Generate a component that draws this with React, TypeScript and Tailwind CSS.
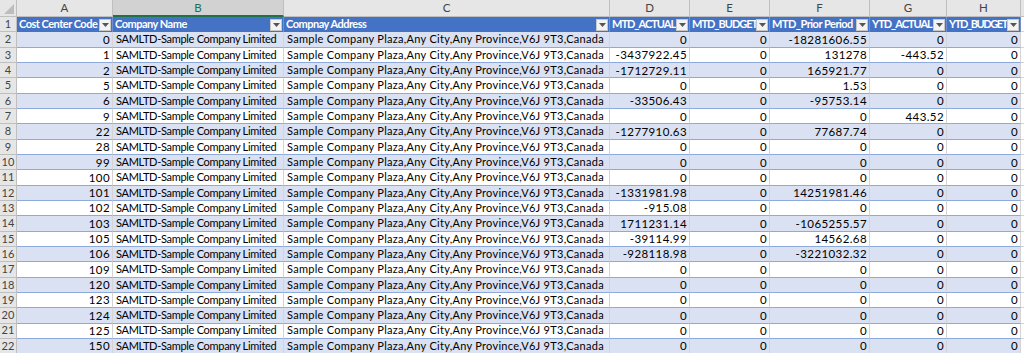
const cols = ["A", "B", "C", "D", "E", "F", "G", "H", ""];

// label + letter spacing so the bold names fit their cells the way Calibri does
const headers: [string, string][] = [
  ["Cost Center Code", "tracking-[-0.5px]"],
  ["Company Name", "tracking-[-0.5px]"],
  ["Compnay Address", "tracking-[-0.5px]"],
  ["MTD_ACTUAL", "tracking-[-1px]"],
  ["MTD_BUDGET", "tracking-[-1px]"],
  ["MTD_Prior Period", "tracking-[-0.5px]"],
  ["YTD_ACTUAL", "tracking-[-1px]"],
  ["YTD_BUDGET", "tracking-[-1.4px]"],
];

const NAME = "SAMLTD-Sample Company Limited";
const ADDR = "Sample Company Plaza,Any City,Any Province,V6J 9T3,Canada";

// code, mtd actual, mtd budget, mtd prior, ytd actual, ytd budget
const rows: [string, string, string, string, string, string][] = [
  ["0", "0", "0", "-18281606.55", "0", "0"],
  ["1", "-3437922.45", "0", "131278", "-443.52", "0"],
  ["2", "-1712729.11", "0", "165921.77", "0", "0"],
  ["5", "0", "0", "1.53", "0", "0"],
  ["6", "-33506.43", "0", "-95753.14", "0", "0"],
  ["9", "0", "0", "0", "443.52", "0"],
  ["22", "-1277910.63", "0", "77687.74", "0", "0"],
  ["28", "0", "0", "0", "0", "0"],
  ["99", "0", "0", "0", "0", "0"],
  ["100", "0", "0", "0", "0", "0"],
  ["101", "-1331981.98", "0", "14251981.46", "0", "0"],
  ["102", "-915.08", "0", "0", "0", "0"],
  ["103", "1711231.14", "0", "-1065255.57", "0", "0"],
  ["105", "-39114.99", "0", "14562.68", "0", "0"],
  ["106", "-928118.98", "0", "-3221032.32", "0", "0"],
  ["109", "0", "0", "0", "0", "0"],
  ["120", "0", "0", "0", "0", "0"],
  ["123", "0", "0", "0", "0", "0"],
  ["124", "0", "0", "0", "0", "0"],
  ["125", "0", "0", "0", "0", "0"],
  ["150", "0", "0", "0", "0", "0"],
];

function FilterButton() {
  return (
    <span className="absolute right-px top-1/2 flex h-[12px] w-[12px] -translate-y-1/2 items-center justify-center border border-[#c8c8c8] bg-[#f3f3f3]">
      <svg width="7" height="4" viewBox="0 0 7 4">
        <path d="M0 0h7L3.5 4z" fill="#555" />
      </svg>
    </span>
  );
}

export default function App() {
  return (
    <div
      className="h-[353px] w-[1024px] overflow-hidden bg-white text-[11px] text-black"
      style={{ fontFamily: "Lato, 'Noto Sans', sans-serif" }}
    >
      <div className="grid grid-cols-[17px_96px_171px_326px_80px_80px_100px_77px_74px_60px] grid-rows-[17px_repeat(22,15.33px)]">
        {/* column letters */}
        <div className="relative border-r border-b border-[#bfbfbf] bg-[#e6e6e6]">
          <svg className="absolute bottom-[2px] right-[2px]" width="10" height="10" viewBox="0 0 10 10">
            <path d="M10 0V10H0z" fill="#bdbdbd" />
          </svg>
        </div>
        {cols.map((c, i) =>
          c === "B" ? (
            <div
              key={i}
              className="flex items-center justify-center border-r border-b-2 border-r-[#bfbfbf] border-b-[#217346] bg-[#d2d2d2] text-[11.5px] text-[#217346]"
            >
              {c}
            </div>
          ) : (
            <div
              key={i}
              className="flex items-center justify-center border-r border-b border-[#bfbfbf] bg-[#e6e6e6] text-[11.5px] text-[#444]"
            >
              {c}
            </div>
          )
        )}

        {/* table header row */}
        <div className="flex items-center justify-center border-r border-b border-[#bfbfbf] bg-[#e6e6e6] text-[#444]">1</div>
        {headers.map(([h, track]) => (
          <div
            key={h}
            className={`relative flex items-center overflow-hidden whitespace-nowrap border-r border-[#6f8fd0] bg-[#4472c4] pl-[2px] font-bold text-white ${track}`}
          >
            {h}
            <FilterButton />
          </div>
        ))}
        <div className="border-r border-b border-[#d4d4d4] bg-white" />

        {rows.map((r, i) => {
          const band = i % 2 === 0 ? "bg-[#d9e1f2]" : "bg-white";
          const cell = `flex items-center overflow-hidden whitespace-nowrap border-r border-b border-r-[#d4d4d4] border-b-[#8ea9db] ${band}`;
          const num = `${cell} justify-end pr-[2px] text-[11.5px] tracking-[0.4px]`;
          return [
            <div
              key={`n${i}`}
              className="flex items-center justify-center border-r border-b border-[#bfbfbf] bg-[#e6e6e6] text-[#444]"
            >
              {i + 2}
            </div>,
            <div key={`a${i}`} className={num}>{r[0]}</div>,
            <div key={`b${i}`} className={`${cell} pl-[3px] tracking-[-0.3px]`}>{NAME}</div>,
            <div key={`c${i}`} className={`${cell} pl-[3px] tracking-[0.28px]`}>{ADDR}</div>,
            <div key={`d${i}`} className={num}>{r[1]}</div>,
            <div key={`e${i}`} className={num}>{r[2]}</div>,
            <div key={`f${i}`} className={num}>{r[3]}</div>,
            <div key={`g${i}`} className={num}>{r[4]}</div>,
            <div key={`h${i}`} className={num}>{r[5]}</div>,
            <div key={`i${i}`} className="border-r border-b border-[#d4d4d4] bg-white" />,
          ];
        })}
      </div>
    </div>
  );
}
